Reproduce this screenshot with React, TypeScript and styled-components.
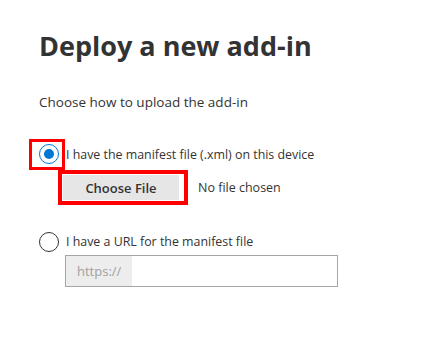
import styled, { createGlobalStyle } from "styled-components";

const GlobalStyle = createGlobalStyle`
  body {
    margin: 0;
    background: #ffffff;
    font-family: "Open Sans", "Liberation Sans", sans-serif;
    color: #333333;
  }
`;

const App = () => {
  return (
    <>
      <GlobalStyle />
      <Page>
        <Title>Deploy a new add-in</Title>
        <Intro>Choose how to upload the add-in</Intro>
        <Option>
          <RadioMark>
            <Radio checked />
          </RadioMark>
          <Label>I have the manifest file (.xml) on this device</Label>
        </Option>
        <FileRow>
          <ButtonMark>
            <FileButton>Choose File</FileButton>
          </ButtonMark>
          <FileName>No file chosen</FileName>
        </FileRow>
        <Option $spaced>
          <Radio />
          <Label>I have a URL for the manifest file</Label>
        </Option>
        <UrlBox>
          <Prefix>https://</Prefix>
          <UrlInput />
        </UrlBox>
      </Page>
    </>
  );
};

const Page = styled.div`
  padding: 27px 0 0 39px;
  width: 428px;
  height: 346px;
  box-sizing: border-box;
`;

const Title = styled.h1`
  margin: 0;
  font-size: 27px;
  line-height: 38px;
  font-weight: 700;
  color: #333333;
`;

const Intro = styled.p`
  margin: 28px 0 0;
  font-size: 13.5px;
  line-height: 18px;
`;

const Option = styled.div<{ $spaced?: boolean }>`
  display: flex;
  align-items: center;
  margin-top: ${(p) => (p.$spaced ? "27px" : "28px")};
`;

const RadioMark = styled.div`
  margin-left: -10px;
  padding: 2px 3px 3px 7px;
  border: 3px solid #ff0000;
  display: flex;
`;

const Radio = styled.span<{ checked?: boolean }>`
  width: 20px;
  height: 20px;
  box-sizing: border-box;
  border-radius: 50%;
  border: 1px solid ${(p) => (p.checked ? "#0078d4" : "#333333")};
  display: flex;
  align-items: center;
  justify-content: center;
  margin-right: ${(p) => (p.checked ? "0" : "6px")};
  &::after {
    content: "";
    width: 10px;
    height: 10px;
    border-radius: 50%;
    background: ${(p) => (p.checked ? "#0078d4" : "transparent")};
  }
`;

const Label = styled.span`
  margin-left: 1px;
  font-size: 12.4px;
  line-height: 18px;
`;

const FileRow = styled.div`
  display: flex;
  align-items: center;
  margin: 0 0 0 19px;
`;

const ButtonMark = styled.div`
  border: 4px solid #ff0000;
  padding: 1px 5px 1px 1px;
  display: flex;
`;

const FileButton = styled.button`
  width: 116px;
  height: 25px;
  border: none;
  background: #e6e6e6;
  font-family: inherit;
  font-size: 13px;
  font-weight: 600;
  color: #333333;
  padding: 0;
`;

const FileName = styled.span`
  margin-left: 10px;
  font-size: 12.5px;
`;

const UrlBox = styled.div`
  display: flex;
  margin: 3px 0 0 26px;
  width: 273px;
  height: 32px;
  box-sizing: border-box;
  border: 1px solid #a6a6a6;
`;

const Prefix = styled.span`
  display: flex;
  align-items: center;
  padding: 0 11px;
  background: #ededed;
  color: #a0a0a0;
  font-size: 13px;
`;

const UrlInput = styled.input`
  flex: 1;
  border: none;
  outline: none;
  background: #ffffff;
`;

export default App;
